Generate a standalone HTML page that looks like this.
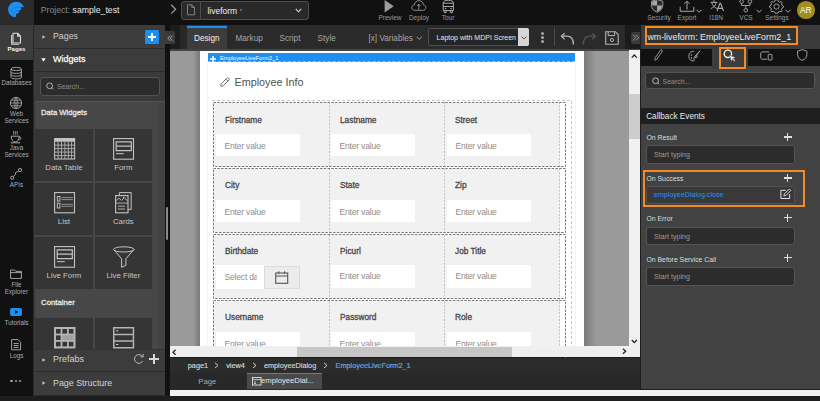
<!DOCTYPE html>
<html><head><meta charset="utf-8">
<style>
*{box-sizing:border-box;margin:0;padding:0}
html,body{width:820px;height:401px;overflow:hidden;background:#1c1c1c;font-family:"Liberation Sans",sans-serif;}
.a{position:absolute}
.t{position:absolute;white-space:nowrap;height:10px;line-height:10px}
svg{position:absolute;overflow:visible}
.tl{color:#9a9a9a;font-size:6.5px;text-align:center}
.rl{position:absolute;left:0;width:33px;text-align:center;color:#acacac;font-size:6.3px;height:8px;line-height:8px;white-space:nowrap}
.hd{position:absolute;left:34px;width:131px;height:23px;background:#3c3c3c;border-bottom:1px solid #2c2c2c}
.tile{position:absolute;width:57.4px;height:52.1px;background:#353535}
.tn{position:absolute;width:57.5px;text-align:center;color:#c4c4c4;font-size:7.8px;height:10px;line-height:10px}
.lbl{position:absolute;left:646.5px;color:#dedede;font-size:6.85px;height:10px;line-height:10px;white-space:nowrap}
.inp{position:absolute;left:646px;width:149px;height:18.5px;background:#2c2c2c;border:1px solid #545454;border-radius:3px;color:#9c9c9c;font-size:7.1px;line-height:18.5px;padding-left:7px;white-space:nowrap}
.plus{position:absolute;left:783.5px;width:8px;height:8px;margin-top:0.5px}
.plus:before{content:"";position:absolute;left:3.45px;top:0;width:1.1px;height:8px;background:#e0e0e0}
.plus:after{content:"";position:absolute;left:0;top:3.45px;width:8px;height:1.1px;background:#e0e0e0}
.row{position:absolute;left:213px;width:353px;background:#f1f1f1;border:1px dashed #8a8a8a}
.fl{position:absolute;color:#484848;font-size:8.3px;-webkit-text-stroke:0.3px #484848;height:10px;line-height:10px;white-space:nowrap}
.fi{position:absolute;width:84px;height:22px;background:#fff;color:#8e8e8e;font-size:8.6px;letter-spacing:-0.22px;line-height:24px;padding-left:8.5px;white-space:nowrap;overflow:hidden}
.vd{position:absolute;width:0;border-left:1px dashed #bdbdbd}
.bc{position:absolute;top:360.5px;color:#d4d4d4;font-size:7.3px;-webkit-text-stroke:0.15px #d4d4d4;height:10px;line-height:10px;white-space:nowrap}
</style></head><body>

<!-- ============ TOP BAR ============ -->
<div class="a" style="left:0;top:0;width:820px;height:25px;background:#111"></div>
<div class="a" style="left:0;top:0;width:34px;height:25px;background:#2a2a2a"></div>
<svg style="left:0;top:0" width="34" height="25" viewBox="0 0 34 25">
  <path d="M16.2 1.7 C19.6 1.7 22.6 3.6 24 6.8 L20.4 7.6 C20.9 8.2 21.3 8.9 21.5 9.6 L18.4 10.9 C18.9 11.5 19.4 12.1 19.6 12.8 L16.4 13.7 C16.1 14.9 15.9 16 15.8 17.3 C11.4 17.2 8.1 13.7 8.1 9.5 C8.1 5.2 11.8 1.7 16.2 1.7 Z" fill="#1f8ff0"/>
  <path d="M10.6 12.6 C11.2 9 14.6 6.6 20.4 7.6 M12.8 14.8 C13.2 12 15.4 10.4 18.4 10.9" stroke="#1872c4" stroke-width="0.7" fill="none"/>
</svg>
<div class="t" style="left:40.7px;top:5.4px;font-size:8.7px;color:#8a8a8a">Project: <span style="color:#e8e8e8">sample_test</span></div>
<svg style="left:170px;top:4px" width="8" height="11"><path d="M1.2 0.8 L5.6 5.2 L1.2 9.6" stroke="#9a9a9a" stroke-width="1.3" fill="none"/></svg>
<div class="a" style="left:180.5px;top:1px;width:128.5px;height:18.5px;background:#292929;border:1px solid #4f4f4f;border-radius:3px"></div>
<div class="a" style="left:200px;top:2px;width:1px;height:16.5px;background:#4f4f4f"></div>
<svg style="left:186px;top:4px" width="10" height="12"><path d="M1.5 0.8 H5.8 L8.5 3.5 V10.8 H1.5 Z M5.8 0.8 V3.5 H8.5" stroke="#8a8a8a" stroke-width="0.9" fill="none"/></svg>
<div class="t" style="left:207.4px;top:5.8px;font-size:8.5px;color:#f0f0f0">liveform</div>
<div class="a" style="left:240.3px;top:9.3px;width:2.2px;height:2.2px;border-radius:50%;background:#1f8ff0"></div>
<svg style="left:295px;top:8px" width="8" height="6"><path d="M0.8 1 L3.5 3.8 L6.2 1" stroke="#cfcfcf" stroke-width="1.1" fill="none"/></svg>

<!-- preview / deploy / tour -->
<svg style="left:384px;top:0" width="11" height="13"><path d="M0.6 0 L9.8 6.3 L0.6 12.6 Z" fill="#9c9c9c"/></svg>
<div class="t tl" style="left:370px;top:12.7px;width:40px">Preview</div>
<svg style="left:411px;top:0" width="16" height="12"><path d="M3.6 10.3 C1.6 10.3 0.8 8.8 0.8 7.6 C0.8 6 2 5 3.4 5 C3.6 2.5 5.6 0.6 8 0.6 C10.6 0.6 12.4 2.6 12.4 4.9 C14 5 14.8 6.3 14.8 7.6 C14.8 9.2 13.6 10.3 12.2 10.3 Z M7.8 9.8 V4.2 M6 6 L7.8 4.2 L9.6 6" stroke="#999" stroke-width="0.9" fill="none"/></svg>
<div class="t tl" style="left:400px;top:12.7px;width:38px">Deploy</div>
<svg style="left:442px;top:0" width="13" height="14"><path d="M1.2 10.5 V3 C1.2 1.2 3 0.3 6.3 0.3 C9.6 0.3 11.4 1.2 11.4 3 V10.5 Z M1.2 6.5 H11.4 M1.2 3.2 H11.4 M2.2 10.5 V12.6 H4.2 V10.5 M8.4 10.5 V12.6 H10.4 V10.5" stroke="#a8a8a8" stroke-width="1" fill="none"/><circle cx="3.5" cy="8.5" r="0.8" fill="#a8a8a8"/><circle cx="9.1" cy="8.5" r="0.8" fill="#a8a8a8"/></svg>
<div class="t tl" style="left:438px;top:12.7px;width:20px">Tour</div>

<!-- right top icons -->
<svg style="left:651px;top:0" width="13" height="13"><path d="M6.1 -0.5 L11.8 1.2 V5.5 C11.8 8.8 9.5 10.8 6.1 12.2 C2.7 10.8 0.5 8.8 0.5 5.5 V1.2 Z" fill="#2a2a2a" stroke="#a8a8a8" stroke-width="0.9"/><path d="M1.2 1.5 L6.1 0.2 V5.6 H1.2 Z M6.1 5.6 H11.1 C11 8.6 9.2 10.4 6.1 11.5 Z" fill="#a8a8a8"/></svg>
<div class="t tl" style="left:643px;top:12.7px;width:32px">Security</div>
<svg style="left:679px;top:0" width="17" height="13"><path d="M1.2 6.8 V11.3 H14.8 V6.8 M8 9.5 V1.2 M5.4 3.8 L8 1.2 L10.6 3.8" stroke="#a8a8a8" stroke-width="1" fill="none"/></svg>
<svg style="left:696px;top:9px" width="7" height="5"><path d="M0.6 0.8 L3.1 3.3 L5.6 0.8" stroke="#a8a8a8" stroke-width="1" fill="none"/></svg>
<div class="t tl" style="left:674px;top:12.7px;width:26px">Export</div>
<svg style="left:709.5px;top:0" width="14" height="12"><path d="M0.6 2.4 H7.4 M4 0.2 V2.4 M1.6 2.4 C2.6 5.5 4.6 7.6 7.2 8.6 M6.4 2.4 C5.6 5.4 3.6 7.6 0.8 8.6" stroke="#a8a8a8" stroke-width="1" fill="none"/><path d="M7 11 L9.9 3.2 H10.6 L13.5 11 M8 8.4 H12.5" stroke="#a8a8a8" stroke-width="1.1" fill="none"/></svg>
<div class="t tl" style="left:706px;top:12.7px;width:20px">I18N</div>
<svg style="left:739px;top:0" width="14" height="13"><circle cx="2.6" cy="1.5" r="1.8" stroke="#a8a8a8" stroke-width="0.9" fill="none"/><circle cx="11" cy="1.5" r="1.8" stroke="#a8a8a8" stroke-width="0.9" fill="none"/><circle cx="6.8" cy="10.3" r="1.8" stroke="#a8a8a8" stroke-width="0.9" fill="none"/><path d="M2.6 3.3 V5.5 H11 V3.3 M6.8 5.5 V8.5" stroke="#a8a8a8" stroke-width="0.9" fill="none"/></svg>
<svg style="left:755.5px;top:9px" width="7" height="5"><path d="M0.6 0.8 L3.1 3.3 L5.6 0.8" stroke="#a8a8a8" stroke-width="1" fill="none"/></svg>
<div class="t tl" style="left:736px;top:12.7px;width:20px">VCS</div>
<svg style="left:768.5px;top:-1px" width="15" height="14"><path d="M7.5 0.8 L9 1.1 L9.4 2.6 L10.9 3.2 L12.2 2.4 L13.2 3.6 L12.5 5 L13 6.5 L14.4 7 V8.5 L13 9 L12.5 10.4 L13.2 11.8 L12.2 12.9 L10.9 12.2 L9.4 12.8 L9 14.2 H6 L5.6 12.8 L4.1 12.2 L2.8 12.9 L1.8 11.8 L2.5 10.4 L2 9 L0.6 8.5 V7 L2 6.5 L2.5 5 L1.8 3.6 L2.8 2.4 L4.1 3.2 L5.6 2.6 L6 1.1 Z" stroke="#a8a8a8" stroke-width="0.9" fill="none"/><circle cx="7.5" cy="7.6" r="2.6" stroke="#a8a8a8" stroke-width="0.9" fill="none"/></svg>
<svg style="left:784.5px;top:9px" width="7" height="5"><path d="M0.6 0.8 L3.1 3.3 L5.6 0.8" stroke="#a8a8a8" stroke-width="1" fill="none"/></svg>
<div class="t tl" style="left:761px;top:12.7px;width:32px">Settings</div>
<div class="a" style="left:797px;top:1.1px;width:17.6px;height:17.6px;border-radius:50%;background:#a38e1f"></div>
<div class="t" style="left:797px;top:5.3px;width:17.6px;text-align:center;font-size:8.3px;color:#fff">AR</div>

<!-- ============ LEFT RAIL ============ -->
<div class="a" style="left:0;top:25px;width:34px;height:371px;background:#111"></div>
<div class="a" style="left:0;top:25px;width:33px;height:35px;background:#3c3c3c"></div>
<svg style="left:0;top:0" width="34" height="60"><path d="M13 33.2 H17.6 L20.5 36.1 V43 H13 Z M17.6 33.2 V36.1 H20.5" stroke="#dcdcdc" stroke-width="1.1" fill="none" stroke-linejoin="round"/><path d="M11.6 35 V44.3 H19" stroke="#cfcfcf" stroke-width="1.1" fill="none" stroke-linejoin="round"/></svg>
<div class="rl" style="top:45.4px;color:#f2f2f2;font-weight:bold;font-size:6.1px">Pages</div>
<svg style="left:10px;top:66.5px" width="13" height="13"><ellipse cx="6.2" cy="2" rx="5.2" ry="1.6" stroke="#b0b0b0" stroke-width="0.9" fill="none"/><path d="M1 2 V10.2 C1 11.2 3 11.9 6.2 11.9 C9.4 11.9 11.4 11.2 11.4 10.2 V2 M1 4.8 C1 5.8 3 6.4 6.2 6.4 C9.4 6.4 11.4 5.8 11.4 4.8 M1 7.6 C1 8.6 3 9.2 6.2 9.2 C9.4 9.2 11.4 8.6 11.4 7.6" stroke="#b0b0b0" stroke-width="0.9" fill="none"/></svg>
<div class="rl" style="top:79px">Databases</div>
<svg style="left:10px;top:97px" width="13" height="13"><circle cx="6" cy="6" r="5.6" stroke="#b0b0b0" stroke-width="0.9" fill="none"/><path d="M0.4 6 H11.6 M1.2 3.2 H10.8 M1.2 8.8 H10.8 M6 0.4 V11.6 M6 0.4 C3.5 2.5 3.5 9.5 6 11.6 M6 0.4 C8.5 2.5 8.5 9.5 6 11.6" stroke="#b0b0b0" stroke-width="0.7" fill="none"/></svg>
<div class="rl" style="top:109.8px">Web</div>
<div class="rl" style="top:116.5px">Services</div>
<svg style="left:10px;top:130px" width="13" height="14"><path d="M1.2 6.2 H9.2 C9.2 10 7.4 12 5.2 12 C3 12 1.2 10 1.2 6.2 Z M9.2 7 C11.6 6.8 11.6 10 8.6 9.8 M0.5 12.8 H10.2 M3.6 1 C3 2 4.2 3 3.6 4.6 M5.4 1 C4.8 2 6 3 5.4 4.6 M7.2 1 C6.6 2 7.8 3 7.2 4.6" stroke="#b0b0b0" stroke-width="0.9" fill="none"/></svg>
<div class="rl" style="top:144px">Java</div>
<div class="rl" style="top:150.5px">Services</div>
<svg style="left:10px;top:168px" width="13" height="13"><circle cx="2.2" cy="9.8" r="1.6" stroke="#b0b0b0" stroke-width="0.9" fill="none"/><circle cx="10" cy="2" r="1.6" stroke="#b0b0b0" stroke-width="0.9" fill="none"/><path d="M3.4 8.6 L5.4 6.6 V4.8 L8.6 3" stroke="#b0b0b0" stroke-width="0.9" fill="none"/></svg>
<div class="rl" style="top:181px">APIs</div>
<svg style="left:10px;top:269px" width="13" height="11"><path d="M0.6 1 H4.6 L5.8 2.4 H11.4 V9.4 H0.6 Z M0.6 3.6 H11.4" stroke="#b0b0b0" stroke-width="0.9" fill="none"/></svg>
<div class="rl" style="top:281.3px">File</div>
<div class="rl" style="top:287.6px">Explorer</div>
<div class="a" style="left:10px;top:308.4px;width:12px;height:7.8px;border-radius:2px;background:#1e8ef0"></div>
<svg style="left:14.5px;top:310.3px" width="4" height="4"><path d="M0 0 L3.2 2 L0 4 Z" fill="#111"/></svg>
<div class="rl" style="top:319px">Tutorials</div>
<svg style="left:11px;top:338.5px" width="11" height="12"><path d="M0.6 0.6 H6.8 L9.6 3.4 V10.8 H0.6 Z M2.6 4.5 H7.6 M2.6 6.5 H7.6 M2.6 8.5 H7.6" stroke="#b0b0b0" stroke-width="0.9" fill="none"/></svg>
<div class="rl" style="top:351.8px">Logs</div>
<div class="a" style="left:10.4px;top:379.6px;width:2.8px;height:2.8px;border-radius:50%;background:#a0a0a0"></div><div class="a" style="left:14.5px;top:379.6px;width:2.8px;height:2.8px;border-radius:50%;background:#a0a0a0"></div><div class="a" style="left:18.6px;top:379.6px;width:2.8px;height:2.8px;border-radius:50%;background:#a0a0a0"></div>

<!-- ============ LEFT PANEL ============ -->
<div class="a" style="left:34px;top:25px;width:131px;height:371px;background:#3a3a3a"></div>
<div class="a" style="left:33px;top:25px;width:1.2px;height:371px;background:#2a2a2a"></div>
<div class="hd" style="top:25px;height:24px"></div>
<svg style="left:41.5px;top:35px" width="6" height="7"><path d="M0.3 0.3 L3.6 2 L0.3 3.7 Z" fill="#bdbdbd"/></svg>
<div class="t" style="left:53px;top:31px;font-size:8.8px;color:#cfcfcf">Pages</div>
<div class="a" style="left:145px;top:30px;width:14px;height:14px;background:#1e8ff0;border-radius:1.5px"></div>
<div class="a" style="left:151.4px;top:33px;width:1.2px;height:8px;background:#f4f4f4"></div>
<div class="a" style="left:148px;top:36.4px;width:8px;height:1.2px;background:#f4f4f4"></div>
<div class="hd" style="top:49px;height:23px"></div>
<svg style="left:41px;top:58px" width="7" height="6"><path d="M0.2 0.3 L4.8 0.3 L2.5 3.8 Z" fill="#f0f0f0"/></svg>
<div class="t" style="left:53px;top:54px;font-size:9px;color:#fafafa;-webkit-text-stroke:0.25px #fafafa">Widgets</div>
<div class="a" style="left:40.4px;top:76.9px;width:119.2px;height:18.8px;background:#2c2c2c;border:1px solid #535353;border-radius:3px"></div>
<svg style="left:46px;top:82px" width="8" height="9"><circle cx="3.6" cy="3.8" r="2.9" stroke="#c0c0c0" stroke-width="0.9" fill="none"/><path d="M5.6 5.8 L7.2 7.4" stroke="#c0c0c0" stroke-width="0.9"/></svg>
<div class="t" style="left:57px;top:81.6px;font-size:7px;color:#8a8a8a">Search...</div>

<!-- widgets section -->
<div class="a" style="left:35px;top:101px;width:130px;height:248px;background:#474747"></div>
<div class="a" style="left:35px;top:101px;width:130px;height:1px;background:#525252"></div>
<div class="t" style="left:41px;top:108.3px;font-size:7.66px;color:#e6e6e6;-webkit-text-stroke:0.3px #e6e6e6">Data Widgets</div>
<div class="tile" style="left:35.2px;top:129px"></div>
<div class="tile" style="left:94.6px;top:129px"></div>
<div class="tile" style="left:35.2px;top:183.2px"></div>
<div class="tile" style="left:94.6px;top:183.2px"></div>
<div class="tile" style="left:35.2px;top:237px"></div>
<div class="tile" style="left:94.6px;top:237px"></div>
<!-- data table icon -->
<svg style="left:53.5px;top:138px" width="22" height="22"><rect x="0.6" y="0.6" width="20" height="20.4" stroke="#bdbdbd" fill="none" stroke-width="1.1"/><rect x="0.3" y="0.3" width="20.6" height="3.4" fill="#c4c4c4"/><path d="M4.1 3.5 V21 M7.5 3.5 V21 M10.9 3.5 V21 M14.3 3.5 V21 M17.6 3.5 V21 M0.5 7.1 H20.7 M0.5 10.6 H20.7 M0.5 14.1 H20.7 M0.5 17.6 H20.7" stroke="#b4b4b4" stroke-width="0.9"/></svg>
<div class="tn" style="left:35.2px;top:163px">Data Table</div>
<!-- form icon -->
<svg style="left:112.5px;top:138px" width="22" height="22"><rect x="0.6" y="0.6" width="19.9" height="20.6" stroke="#c4c4c4" fill="none" stroke-width="1.1"/><path d="M3.2 3.8 H18.3 V12.6 H3.2 Z M3.2 8.2 H18.3" stroke="#c4c4c4" fill="none" stroke-width="1.2"/><path d="M3 15.6 H10.8" stroke="#b0b0b0" stroke-width="1.2"/></svg>
<div class="tn" style="left:94.6px;top:163px">Form</div>
<!-- list icon -->
<svg style="left:53.5px;top:192px" width="22" height="22"><rect x="0.6" y="0.6" width="19.9" height="20.2" stroke="#c4c4c4" fill="none" stroke-width="1.1"/><rect x="3.3" y="4.5" width="2.6" height="4.6" stroke="#c4c4c4" fill="none" stroke-width="0.9"/><rect x="3.3" y="11.2" width="2.6" height="4.8" stroke="#c4c4c4" fill="none" stroke-width="0.9"/><path d="M7.4 5.6 H18.9 M7.4 7.6 H18.9 M7.4 12.3 H18.9 M7.4 14.3 H18.9" stroke="#8e8e8e" stroke-width="1"/></svg>
<div class="tn" style="left:35.2px;top:217px">List</div>
<!-- cards icon -->
<svg style="left:115px;top:192px" width="17" height="22"><path d="M4.4 3.6 V0.6 H16.2 V17.4 H13" stroke="#c4c4c4" fill="none" stroke-width="1"/><rect x="0.6" y="3.6" width="12.4" height="17.2" stroke="#c4c4c4" fill="none" stroke-width="1.1"/><path d="M0.6 11.1 H13 M1.2 8.6 L4 6.2 L6.6 8.4 L9.2 5.8 L12.6 8.8 M3 14.2 H10 M3 17 H10" stroke="#b8b8b8" fill="none" stroke-width="0.9"/><circle cx="8.6" cy="5.4" r="0.6" fill="#c4c4c4"/></svg>
<div class="tn" style="left:94.6px;top:217px">Cards</div>
<!-- live form icon -->
<svg style="left:53.5px;top:245.5px" width="22" height="22"><rect x="0.6" y="0.6" width="19.9" height="20.6" stroke="#c4c4c4" fill="none" stroke-width="1.1"/><path d="M3.2 3.8 H18.3 V12.6 H3.2 Z M3.2 8.2 H18.3" stroke="#c4c4c4" fill="none" stroke-width="1.2"/><path d="M3 15.6 H10.8" stroke="#b0b0b0" stroke-width="1.2"/></svg>
<div class="tn" style="left:35.2px;top:270.5px">Live Form</div>
<!-- live filter icon -->
<svg style="left:112.5px;top:245.5px" width="23" height="23"><ellipse cx="10.8" cy="3.4" rx="10.2" ry="2.6" stroke="#c4c4c4" fill="none" stroke-width="1"/><path d="M0.6 3.4 L8.6 12.8 V21.3 L12.9 19.4 V12.8 L21 3.4" stroke="#c4c4c4" fill="none" stroke-width="1"/></svg>
<div class="tn" style="left:94.6px;top:270.5px">Live Filter</div>
<div class="t" style="left:41px;top:297.8px;font-size:7.8px;color:#e6e6e6;-webkit-text-stroke:0.3px #e6e6e6">Container</div>
<div class="tile" style="left:35.2px;top:317.7px;height:31px"></div>
<div class="tile" style="left:94.6px;top:317.7px;height:31px"></div>
<svg style="left:53.5px;top:326.5px" width="22" height="22"><rect x="0" y="0" width="21.5" height="21.5" fill="#b4b4b4"/><g fill="#353535"><rect x="2" y="2" width="4.6" height="4.6"/><rect x="8.4" y="2" width="4.6" height="4.6"/><rect x="14.8" y="2" width="4.6" height="4.6"/><rect x="2" y="8.4" width="4.6" height="4.6"/><rect x="2" y="14.8" width="4.6" height="4.6"/><rect x="8.4" y="14.8" width="4.6" height="4.6"/><rect x="14.8" y="14.8" width="4.6" height="4.6"/></g><rect x="8.4" y="8.4" width="11" height="4.6" fill="#a0a0a0"/></svg>
<svg style="left:112.5px;top:326.5px" width="22" height="22"><rect x="0.75" y="0.75" width="19.7" height="20" stroke="#b4b4b4" fill="none" stroke-width="1.5"/><path d="M0.5 7.5 H21 M0.5 14 H21" stroke="#b4b4b4" stroke-width="1.3"/><path d="M3.2 3.8 H5.2 M3.2 17.5 H5.2" stroke="#ddd" stroke-width="1"/></svg>
<!-- prefabs / page structure -->
<div class="hd" style="top:349px;height:23px;border-top:1px solid #333"></div>
<svg style="left:42px;top:357.5px" width="6" height="7"><path d="M0.3 0.3 L3.6 2 L0.3 3.7 Z" fill="#bdbdbd"/></svg>
<div class="t" style="left:53px;top:354px;font-size:9px;color:#d4d4d4">Prefabs</div>
<svg style="left:133px;top:353px" width="12" height="12"><path d="M9.6 3.6 A4.4 4.4 0 1 0 9.8 8" stroke="#b8b8b8" stroke-width="1" fill="none"/><path d="M7.4 3.8 L10.2 3.8 L10.2 1" stroke="#b8b8b8" stroke-width="1" fill="none"/></svg>
<div class="a" style="left:153.4px;top:354px;width:1.3px;height:10px;background:#d8d8d8"></div>
<div class="a" style="left:149px;top:358.4px;width:10px;height:1.3px;background:#d8d8d8"></div>
<div class="hd" style="top:372px;height:24px"></div>
<svg style="left:42px;top:380.5px" width="6" height="7"><path d="M0.3 0.3 L3.6 2 L0.3 3.7 Z" fill="#bdbdbd"/></svg>
<div class="t" style="left:53px;top:377.5px;font-size:8.9px;color:#d4d4d4">Page Structure</div>
<div class="a" style="left:158px;top:102px;width:7px;height:247px;background:#434343"></div>
<!-- divider strip -->
<div class="a" style="left:165px;top:49px;width:5px;height:346px;background:#121212"></div>
<div class="a" style="left:165.6px;top:206.6px;width:2.4px;height:33px;background:#8a8a8a;border-radius:1px"></div>

<!--CANVAS-->
<!-- canvas toolbar -->
<div class="a" style="left:165px;top:25px;width:475px;height:23.8px;background:#2a2a2a"></div>
<div class="a" style="left:165px;top:25px;width:5px;height:24px;background:#111"></div>
<div class="a" style="left:170px;top:25px;width:10px;height:24px;background:#1c1c1c"></div>
<div class="a" style="left:180px;top:25px;width:7px;height:24px;background:#282828"></div>
<div class="a" style="left:165px;top:31.3px;width:10px;height:12.5px;background:#3a3a3a;border-radius:0 2px 2px 0"></div>
<svg style="left:166.8px;top:34.5px" width="8" height="8"><path d="M3.2 0.6 L0.8 3.2 L3.2 5.8 M5.6 0.6 L3.2 3.2 L5.6 5.8" stroke="#a8a8a8" stroke-width="0.9" fill="none"/></svg>
<div class="a" style="left:187px;top:25px;width:40px;height:24px;background:#3c3c3c"></div>
<div class="a" style="left:187px;top:25.5px;width:40px;height:2px;background:#1e8ff0"></div>
<div class="t" style="left:194px;top:34px;font-size:8.2px;color:#f2f2f2">Design</div>
<div class="t" style="left:235.5px;top:34px;font-size:8.2px;color:#a6a6a6">Markup</div>
<div class="t" style="left:279.5px;top:34px;font-size:8.2px;color:#a6a6a6">Script</div>
<div class="t" style="left:317.6px;top:34px;font-size:8.2px;color:#a6a6a6">Style</div>
<div class="t" style="left:368.5px;top:34px;font-size:8.2px;color:#a6a6a6">[x] Variables</div>
<svg style="left:415.8px;top:36px" width="7" height="5"><path d="M0.6 0.8 L3.2 3.4 L5.8 0.8" stroke="#a6a6a6" stroke-width="1" fill="none"/></svg>
<div class="a" style="left:427.5px;top:27.8px;width:101.5px;height:18.5px;background:#252525;border:1px solid #4e4e4e;border-radius:2px"></div>
<div class="a" style="left:518.2px;top:28px;width:10.8px;height:17.8px;background:#d6d6d6;border-radius:0 2px 2px 0"></div>
<svg style="left:520.5px;top:35.5px" width="7" height="5"><path d="M0.6 0.6 L3 3 L5.4 0.6" stroke="#444" stroke-width="0.9" fill="none"/></svg>
<div class="t" style="left:436.6px;top:33.1px;font-size:7px;color:#e8e8e8">Laptop with MDPI Screen</div>
<div class="a" style="left:540.5px;top:31.5px;width:3.2px;height:3.2px;border-radius:50%;background:#a8a8a8"></div>
<div class="a" style="left:540.5px;top:35.7px;width:3.2px;height:3.2px;border-radius:50%;background:#a8a8a8"></div>
<div class="a" style="left:540.5px;top:40.1px;width:3.2px;height:3.2px;border-radius:50%;background:#a8a8a8"></div>
<div class="a" style="left:554px;top:27.3px;width:1px;height:19px;background:#4a4a4a"></div>
<svg style="left:560px;top:31.5px" width="15" height="13"><path d="M13.4 12.4 C13.6 7 11 4.2 7 4.2 H2" stroke="#b4b4b4" stroke-width="1.3" fill="none"/><path d="M4.6 1.2 L1.4 4.2 L4.6 7.2" stroke="#b4b4b4" stroke-width="1.3" fill="none"/></svg>
<svg style="left:582px;top:31.5px" width="15" height="13"><path d="M1.4 12.4 C1.2 7 3.8 4.2 7.8 4.2 H12.8" stroke="#545454" stroke-width="1.3" fill="none"/><path d="M10.2 1.2 L13.4 4.2 L10.2 7.2" stroke="#545454" stroke-width="1.3" fill="none"/></svg>
<svg style="left:605px;top:30.5px" width="14" height="14"><path d="M0.7 0.7 H10.4 L13.2 3.5 V13.2 H0.7 Z" stroke="#b4b4b4" stroke-width="1.1" fill="none"/><path d="M3.2 0.7 V4.6 H9.6 V0.7" stroke="#b4b4b4" stroke-width="1" fill="none"/><circle cx="6.9" cy="9" r="1.6" stroke="#b4b4b4" stroke-width="1" fill="none"/></svg>
<div class="a" style="left:625px;top:25px;width:15px;height:24px;background:#1b1b1b"></div>
<div class="a" style="left:631px;top:32px;width:9.5px;height:11.5px;background:#3a3a3a;border-radius:2px 0 0 2px"></div>
<svg style="left:632px;top:34px" width="8" height="8"><path d="M1 0.8 L3.7 3.6 L1 6.4 M4 0.8 L6.7 3.6 L4 6.4" stroke="#a0a0a0" stroke-width="0.9" fill="none"/></svg>

<!-- canvas area -->
<div class="a" style="left:170px;top:49px;width:470px;height:298px;background:#9a9a9a"></div>
<div class="a" style="left:170px;top:48.8px;width:470px;height:1.8px;background:#444"></div>
<div class="a" style="left:193px;top:51px;width:7px;height:296px;background:linear-gradient(90deg,#9a9a9a,#7a7a7a)"></div>
<div class="a" style="left:584px;top:51px;width:12px;height:296px;background:linear-gradient(90deg,#7a7a7a,#9a9a9a)"></div>
<div class="a" style="left:199.7px;top:50.6px;width:384.3px;height:296.4px;background:#fff"></div>
<!-- blue bar -->
<div class="a" style="left:208px;top:53.4px;width:367px;height:8.9px;background:#1e8ff0;border-bottom:1px dashed #8cc4f5"></div>
<svg style="left:209px;top:54.5px" width="9" height="8"><path d="M4 0.9 V6.9 M1 3.9 H7" stroke="#fff" stroke-width="1.5" fill="none"/></svg>
<div class="t" style="left:219.9px;top:53px;font-size:5.7px;color:#fff">EmployeeLiveForm2_1</div>
<!-- outer light dashed container -->
<div class="a" style="left:207px;top:62px;width:1px;height:285px;background:#f3f3f3"></div>
<div class="a" style="left:575px;top:62px;width:1px;height:285px;background:#f3f3f3"></div>
<!-- header -->
<svg style="left:219.5px;top:76.8px" width="11" height="10"><path d="M0.7 9.3 L1.2 6.8 L6.9 1.1 C7.4 0.6 8 0.6 8.5 1.1 L8.9 1.5 C9.4 2 9.4 2.6 8.9 3.1 L3.2 8.8 Z M5.9 2.1 L7.9 4.1" stroke="#5a5a5a" stroke-width="0.85" fill="none"/></svg>
<div class="t" style="left:234.5px;top:75.6px;font-size:10.8px;height:12px;line-height:12px;color:#505050">Employee Info</div>
<!-- form rows -->
<div class="a" style="left:214px;top:103px;width:345.5px;height:63px;background:#f1f1f1"></div>
<div class="a" style="left:214px;top:169px;width:345.5px;height:63px;background:#f1f1f1"></div>
<div class="a" style="left:214px;top:235px;width:345.5px;height:63px;background:#f1f1f1"></div>
<div class="a" style="left:214px;top:301px;width:345.5px;height:46px;background:#f1f1f1"></div>
<svg style="left:0;top:0" width="820" height="347" viewBox="0 0 820 347">
<path d="M212 100.5 H571.5 V347" stroke="#c6c6c6" stroke-width="1" stroke-dasharray="3 2" fill="none"/>
<path d="M329.5 102 V347 M444.5 102 V347 M559.5 102 V347" stroke="#c2c2c2" stroke-width="1" stroke-dasharray="2 1.5" fill="none"/>
<rect x="213.5" y="102.5" width="352" height="64" stroke="#787878" stroke-width="1" stroke-dasharray="2.5 1.3" fill="none"/>
<rect x="213.5" y="168.5" width="352" height="64" stroke="#787878" stroke-width="1" stroke-dasharray="2.5 1.3" fill="none"/>
<rect x="213.5" y="234.5" width="352" height="64" stroke="#787878" stroke-width="1" stroke-dasharray="2.5 1.3" fill="none"/>
<rect x="213.5" y="300.5" width="352" height="64" stroke="#787878" stroke-width="1" stroke-dasharray="2.5 1.3" fill="none"/>
</svg>
<div class="fl" style="left:225px;top:114.6px">Firstname</div>
<div class="fl" style="left:340px;top:114.6px">Lastname</div>
<div class="fl" style="left:455px;top:114.6px">Street</div>
<div class="fi" style="left:216px;top:134px">Enter value</div>
<div class="fi" style="left:331px;top:134px">Enter value</div>
<div class="fi" style="left:447px;top:134px">Enter value</div>

<div class="fl" style="left:225px;top:179.6px">City</div>
<div class="fl" style="left:340px;top:179.6px">State</div>
<div class="fl" style="left:455px;top:179.6px">Zip</div>
<div class="fi" style="left:216px;top:200px">Enter value</div>
<div class="fi" style="left:331px;top:200px">Enter value</div>
<div class="fi" style="left:447px;top:200px">Enter value</div>

<div class="fl" style="left:225px;top:245.6px">Birthdate</div>
<div class="fl" style="left:340px;top:245.6px">Picurl</div>
<div class="fl" style="left:455px;top:245.6px">Job Title</div>
<div class="a" style="left:216px;top:265.3px;width:48px;height:23.3px;background:#fff"></div><div class="fi" style="left:216px;top:265.3px;width:40.5px;height:23px;line-height:24px;background:transparent">Select da</div>
<div class="a" style="left:264px;top:265.5px;width:35.5px;height:23px;background:#ececec;border:1px solid #dcdcdc"></div>
<svg style="left:275px;top:271px" width="14" height="13"><rect x="0.7" y="2" width="12" height="10.3" stroke="#555" stroke-width="1.1" fill="none"/><path d="M0.7 5 H12.7 M3.8 0.3 V3 M9.6 0.3 V3" stroke="#555" stroke-width="1.1"/></svg>
<div class="fi" style="left:331px;top:265.3px;height:22.3px;line-height:23.5px">Enter value</div>
<div class="fi" style="left:447px;top:265.3px;height:22.3px;line-height:23.5px">Enter value</div>

<div class="fl" style="left:225px;top:312.4px">Username</div>
<div class="fl" style="left:340px;top:312.4px">Password</div>
<div class="fl" style="left:455px;top:312.4px">Role</div>
<div class="fi" style="left:216px;top:332px">Enter value</div>
<div class="fi" style="left:331px;top:332px">Enter value</div>
<div class="fi" style="left:447px;top:332px">Enter value</div>

<!-- scrollbars -->
<div class="a" style="left:628.8px;top:50px;width:11px;height:297px;background:#f0f0f0"></div>
<div class="a" style="left:628.8px;top:94px;width:11px;height:44.5px;background:#cdcdcd"></div>
<svg style="left:631px;top:54px" width="7" height="5"><path d="M0.8 3.6 L3.3 1 L5.8 3.6" stroke="#222" stroke-width="1.3" fill="none"/></svg>
<svg style="left:631px;top:338.5px" width="7" height="5"><path d="M0.8 1 L3.3 3.6 L5.8 1" stroke="#222" stroke-width="1.3" fill="none"/></svg>
<div class="a" style="left:170px;top:346.3px;width:470px;height:11.2px;background:#efefef"></div>
<div class="a" style="left:296.5px;top:346.5px;width:215px;height:10.5px;background:#c6c6c6"></div>
<svg style="left:172px;top:348.5px" width="5" height="7"><path d="M3.6 0.8 L1 3.3 L3.6 5.8" stroke="#222" stroke-width="1.3" fill="none"/></svg>
<svg style="left:621.5px;top:348px" width="5" height="7"><path d="M1 0.8 L3.6 3.3 L1 5.8" stroke="#222" stroke-width="1.3" fill="none"/></svg>

<!-- breadcrumb -->
<div class="a" style="left:170px;top:357.5px;width:470px;height:16px;background:#2c2c2c"></div><div class="a" style="left:170px;top:373px;width:470px;height:16.5px;background:#282828"></div>
<div class="bc" style="left:187.8px">page1</div>
<svg style="left:213.5px;top:362px" width="6" height="7"><path d="M1 0.8 L4 3.4 L1 6" stroke="#d0d0d0" stroke-width="1" fill="none"/></svg>
<div class="bc" style="left:226.2px">view4</div>
<svg style="left:251.5px;top:362px" width="6" height="7"><path d="M1 0.8 L4 3.4 L1 6" stroke="#d0d0d0" stroke-width="1" fill="none"/></svg>
<div class="bc" style="left:263.9px">employeeDialog</div>
<svg style="left:322.5px;top:362px" width="6" height="7"><path d="M1 0.8 L4 3.4 L1 6" stroke="#d0d0d0" stroke-width="1" fill="none"/></svg>
<div class="bc" style="left:335.6px;color:#2b90ef">EmployeeLiveForm2_1</div>
<div class="t" style="left:198.3px;top:377.2px;font-size:7.7px;color:#a8a8a8">Page</div>
<div class="a" style="left:246.8px;top:372.7px;width:75.2px;height:16.4px;background:#4a4a4a"></div>
<div class="a" style="left:246.8px;top:372.7px;width:75.2px;height:1.3px;background:#1e8ff0"></div>
<svg style="left:251.5px;top:376.5px" width="10" height="9"><rect x="0.5" y="0.5" width="8.5" height="7.5" stroke="#e0e0e0" stroke-width="0.9" fill="none"/><path d="M0.5 2.6 H9 M2 5 H4 M2 6.5 H4" stroke="#e0e0e0" stroke-width="0.8"/></svg>
<div class="t" style="left:261px;top:376.3px;font-size:7.7px;color:#e8e8e8;width:56px;overflow:hidden">employeeDial...</div>
<div class="a" style="left:169.8px;top:389.5px;width:650.2px;height:6.5px;background:#f2f2f2"></div>


<!--RIGHT-->
<!-- right panel -->
<div class="a" style="left:640px;top:25px;width:180px;height:364px;background:#424242"></div>
<div class="a" style="left:640px;top:25px;width:1px;height:364px;background:#1e1e1e"></div>
<div class="a" style="left:641px;top:25px;width:179px;height:24px;background:#3b3b3b"></div>
<div class="a" style="left:644.7px;top:26.2px;width:153.1px;height:18.6px;border:2px solid #f28b25;background:#313131"></div>
<div class="t" style="left:647.4px;top:32px;font-size:8.87px;color:#ececec">wm-liveform: EmployeeLiveForm2_1</div>
<!-- tabs -->
<div class="a" style="left:641px;top:48.8px;width:71px;height:17.7px;background:#111"></div>
<div class="a" style="left:748px;top:48.8px;width:72px;height:17.7px;background:#111"></div>
<div class="a" style="left:712px;top:48.8px;width:36px;height:20px;background:#3c3c3c"></div>
<div class="a" style="left:718.8px;top:46.8px;width:27.4px;height:22.4px;border:2.1px solid #f28b25"></div>
<svg style="left:653.5px;top:49.3px" width="10" height="12"><path d="M1 11.3 L0.9 9.2 L6.8 0.7 L8.6 1.9 L2.7 10.4 Z" stroke="#a8a8a8" stroke-width="0.85" fill="none" stroke-linejoin="round"/></svg>
<svg style="left:688px;top:50px" width="13" height="12"><path d="M6.4 1.4 C3 0.6 0.8 3.2 0.8 6.2 C0.8 9.4 3 11 5.4 11 C6.6 11 6.4 9.6 6 9 C5.6 8.2 6.2 7.4 7 7.6 C8.4 8 9.6 7 9.2 5.6" stroke="#b0b0b0" stroke-width="0.9" fill="none"/><path d="M12 0.8 L7.4 7.2 L6.4 6.6 Z" stroke="#b0b0b0" stroke-width="0.8" fill="none"/><circle cx="3.4" cy="5" r="0.8" fill="#b0b0b0"/><circle cx="3.6" cy="8" r="0.8" fill="#b0b0b0"/></svg>
<svg style="left:720px;top:46px" width="20" height="18"><circle cx="7.9" cy="7.8" r="3.7" stroke="#f2f2f2" stroke-width="1.4" fill="none"/><path d="M9.2 9 L15.8 11.6 L13.3 12.5 L15.3 14.6 L14.4 15.5 L12.4 13.4 L11.5 15.8 Z" fill="#f2f2f2" stroke="#3c3c3c" stroke-width="0.5"/></svg>
<svg style="left:760px;top:50.5px" width="13" height="10"><path d="M9.2 0.9 H2.3 C1.4 0.9 0.7 1.6 0.7 2.5 V6.6 C0.7 7.5 1.4 8.2 2.3 8.2 H7" stroke="#b0b0b0" stroke-width="0.9" fill="none"/><rect x="8.2" y="3.4" width="3.8" height="5.6" rx="0.6" stroke="#b0b0b0" stroke-width="0.9" fill="none"/></svg>
<svg style="left:797px;top:49.3px" width="11" height="12"><path d="M5.2 0.6 L9.9 2.2 V5.6 C9.9 8.4 7.9 10.4 5.2 11.4 C2.5 10.4 0.5 8.4 0.5 5.6 V2.2 Z" stroke="#b0b0b0" stroke-width="0.9" fill="none"/></svg>
<!-- search -->
<div class="a" style="left:645px;top:72.4px;width:169.7px;height:17px;background:#2c2c2c;border:1px solid #555;border-radius:3px"></div>
<svg style="left:652px;top:76.5px" width="8" height="9"><circle cx="3.6" cy="3.8" r="2.9" stroke="#c8c8c8" stroke-width="0.9" fill="none"/><path d="M5.6 5.8 L7.2 7.4" stroke="#c8c8c8" stroke-width="0.9"/></svg>
<div class="t" style="left:662.5px;top:76.7px;font-size:7px;color:#8c8c8c">Search...</div>
<!-- callback header -->
<div class="a" style="left:641px;top:108.3px;width:179px;height:15.7px;background:#1f1f1f"></div>
<div class="t" style="left:646.2px;top:112.3px;font-size:8.2px;color:#e8e8e8">Callback Events</div>
<!-- events -->
<div class="lbl" style="top:133.2px">On Result</div>
<div class="plus" style="top:132.5px"></div>
<div class="inp" style="top:145px;height:18.8px;line-height:19px">Start typing</div>
<div class="a" style="left:643px;top:169.6px;width:162px;height:37.2px;border:2px solid #f28b25"></div>
<div class="lbl" style="top:174.2px">On Success</div>
<div class="plus" style="top:173.5px"></div>
<div class="inp" style="top:186.2px;height:17.5px;line-height:16.5px;color:#2b90ef;background:#393939;border-color:#515151">employeeDialog.close</div>
<svg style="left:780px;top:188px" width="12" height="12"><path d="M5.8 2.3 H0.9 V10.5 H9.6 V6" stroke="#e0e0e0" stroke-width="1" fill="none"/><path d="M3.9 7.9 L4.3 6 L9.3 1 L10.8 2.5 L5.8 7.5 Z" stroke="#e0e0e0" stroke-width="0.9" fill="none"/></svg>
<div class="lbl" style="top:213.8px">On Error</div>
<div class="plus" style="top:213px"></div>
<div class="inp" style="top:227.4px;height:18px;line-height:19.5px">Start typing</div>
<div class="lbl" style="top:255px">On Before Service Call</div>
<div class="plus" style="top:253.3px"></div>
<div class="inp" style="top:267.3px;height:19px;line-height:19px">Start typing</div>


<div class="a" style="left:0;top:396px;width:820px;height:5px;background:#1e1e1e"></div>
</body></html>
